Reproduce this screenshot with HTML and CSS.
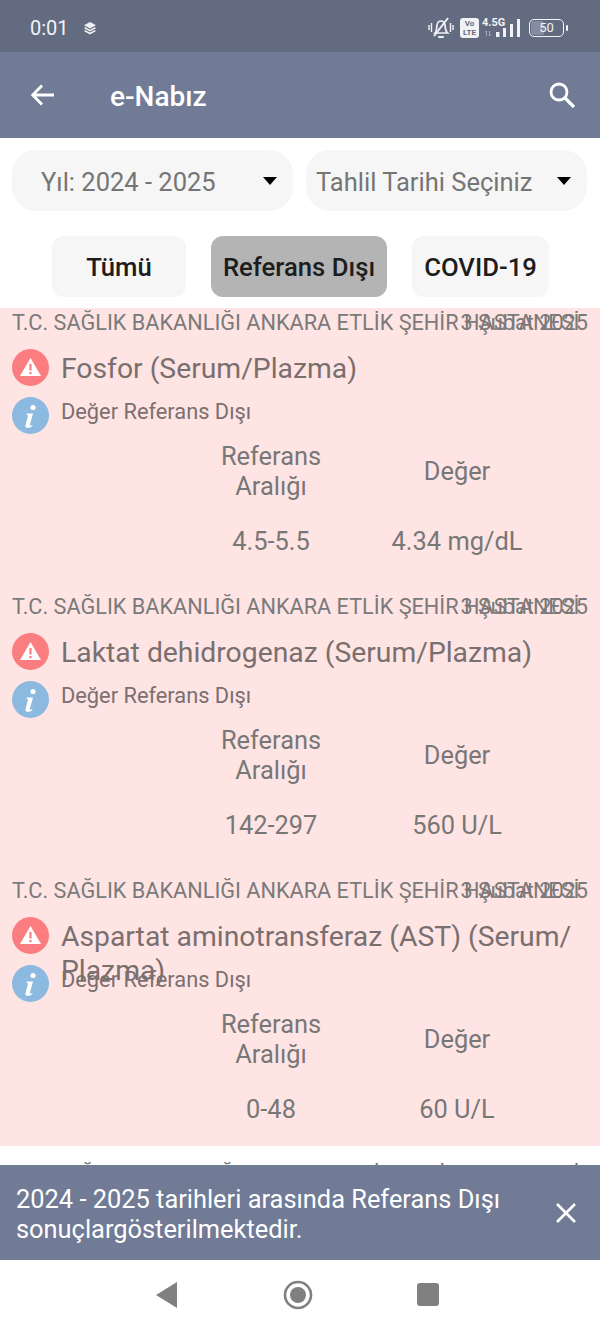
FILE: index.html
```html
<!DOCTYPE html>
<html lang="tr">
<head>
<meta charset="utf-8">
<title>e-Nabız</title>
<link rel="stylesheet" href="styles.css">
</head>
<body>
<div class="screen">
  <div class="statusbar">
    <div class="status-left">
      <span class="clock">0:01</span>
      <svg class="layers" viewBox="0 0 14 14" width="14" height="14"><path d="M7 1 13 4.200 7 7.400 1 4.200Z" fill="#eef0f4"/><path d="M1.600 6.800 7 9.700 12.400 6.800M1.600 9.600 7 12.500 12.400 9.600" fill="none" stroke="#eef0f4" stroke-width="1.600"/></svg>
    </div>
    <div class="status-right">
      <svg width="26" height="24" viewBox="0 0 26 24"><g fill="none" stroke="#f1f2f5" stroke-width="1.700"><path d="M7 17c2-2 1.500-5 2-8 .5-2.500 2-4 4-4s3.500 1.500 4 4c.5 3 0 6 2.500 8Z"/><path d="M6 20 20 2" stroke-width="2"/><path d="M1 9v5M3.500 7v9M22.500 7v9M25 9v5" stroke-width="1.400"/></g><rect x="10" y="20" width="6" height="2" rx="1" fill="#f1f2f5"/></svg>
      <span class="volte"><span>Vo</span><span>LTE</span></span>
      <span class="net">4.5G</span>
      <svg class="signal" width="38" height="18" viewBox="0 0 38 18"><path d="M3.500 17V12M2 13.500 3.500 12M6.500 12V17M8 15.500 6.500 17" fill="none" stroke="#f1f2f5" stroke-width="1" opacity=".45"/><g fill="#f1f2f5"><rect x="13" y="13" width="3.500" height="5"/><rect x="20" y="9" width="3" height="9"/><rect x="27" y="5" width="3" height="13"/><rect x="34" y="0" width="3" height="18"/></g></svg>
      <span class="battery"><span class="battery-fill"></span><span class="battery-num">50</span></span>
      <span class="battery-tip"></span>
    </div>
  </div>

  <header class="appbar">
    <svg class="back" width="28" height="28" viewBox="0 0 28 28"><path d="M25 14H4M13 4.500 3.700 14 13 23.500" fill="none" stroke="#fff" stroke-width="2.800"/></svg>
    <h1 class="apptitle">e-Nabız</h1>
    <svg class="search" width="30" height="30" viewBox="0 0 30 30"><circle cx="12" cy="12" r="8" fill="none" stroke="#fff" stroke-width="2.800"/><path d="M18 18 27 27" stroke="#fff" stroke-width="3.200"/></svg>
  </header>

  <div class="selects">
    <div class="select select-year"><span>Yıl: 2024 - 2025</span><i class="caret"></i></div>
    <div class="select select-date"><span>Tahlil Tarihi Seçiniz</span><i class="caret"></i></div>
  </div>

  <div class="tabs">
    <div class="tab tab-all">Tümü</div>
    <div class="tab tab-ref active">Referans Dışı</div>
    <div class="tab tab-covid">COVID-19</div>
  </div>

  <main class="list">
    <div class="group">
      <article class="card">
        <div class="head"><span class="hosp">T.C. SAĞLIK BAKANLIĞI ANKARA ETLİK ŞEHİR HASTANESİ</span><span class="date">3 Şubat 2025</span></div>
        <div class="row-title">
          <svg class="ic" viewBox="0 0 37 37"><circle cx="18.500" cy="18.500" r="18.500" fill="#fb7d7f"/><path d="M18.500 9 29 27H8Z" fill="#fff"/><path d="M18.500 15v6.500M18.500 23v2.200" stroke="#fb7d7f" stroke-width="2.200"/></svg>
          <h2 class="name">Fosfor (Serum/Plazma)</h2>
        </div>
        <div class="row-info">
          <svg class="ic" viewBox="0 0 37 37"><circle cx="18.500" cy="18.500" r="18.500" fill="#8cb9df"/><circle cx="21" cy="10.500" r="2.600" fill="#fff"/><path d="M15 16.500h6l-3.200 11.500c-.3 1 .8 1 2.700-.3l-.4 1.800c-3 2-7.500 2-6.600-1.500l2.400-8.700c.3-1.500-.8-1.500-1.500-1.300Z" fill="#fff"/></svg>
          <span class="info">Değer Referans Dışı</span>
        </div>
        <div class="table">
          <div class="th th-ref">Referans<br>Aralığı</div><div class="th">Değer</div>
          <div class="td">4.5-5.5</div><div class="td">4.34 mg/dL</div>
        </div>
      </article>

      <article class="card">
        <div class="head"><span class="hosp">T.C. SAĞLIK BAKANLIĞI ANKARA ETLİK ŞEHİR HASTANESİ</span><span class="date">3 Şubat 2025</span></div>
        <div class="row-title">
          <svg class="ic" viewBox="0 0 37 37"><circle cx="18.500" cy="18.500" r="18.500" fill="#fb7d7f"/><path d="M18.500 9 29 27H8Z" fill="#fff"/><path d="M18.500 15v6.500M18.500 23v2.200" stroke="#fb7d7f" stroke-width="2.200"/></svg>
          <h2 class="name">Laktat dehidrogenaz (Serum/Plazma)</h2>
        </div>
        <div class="row-info">
          <svg class="ic" viewBox="0 0 37 37"><circle cx="18.500" cy="18.500" r="18.500" fill="#8cb9df"/><circle cx="21" cy="10.500" r="2.600" fill="#fff"/><path d="M15 16.500h6l-3.200 11.500c-.3 1 .8 1 2.700-.3l-.4 1.800c-3 2-7.500 2-6.600-1.500l2.400-8.700c.3-1.500-.8-1.500-1.500-1.300Z" fill="#fff"/></svg>
          <span class="info">Değer Referans Dışı</span>
        </div>
        <div class="table">
          <div class="th th-ref">Referans<br>Aralığı</div><div class="th">Değer</div>
          <div class="td">142-297</div><div class="td">560 U/L</div>
        </div>
      </article>

      <article class="card card-last">
        <div class="head"><span class="hosp">T.C. SAĞLIK BAKANLIĞI ANKARA ETLİK ŞEHİR HASTANESİ</span><span class="date">3 Şubat 2025</span></div>
        <div class="row-title">
          <svg class="ic" viewBox="0 0 37 37"><circle cx="18.500" cy="18.500" r="18.500" fill="#fb7d7f"/><path d="M18.500 9 29 27H8Z" fill="#fff"/><path d="M18.500 15v6.500M18.500 23v2.200" stroke="#fb7d7f" stroke-width="2.200"/></svg>
          <h2 class="name">Aspartat aminotransferaz (AST) (Serum/<br>Plazma)</h2>
        </div>
        <div class="row-info">
          <svg class="ic" viewBox="0 0 37 37"><circle cx="18.500" cy="18.500" r="18.500" fill="#8cb9df"/><circle cx="21" cy="10.500" r="2.600" fill="#fff"/><path d="M15 16.500h6l-3.200 11.500c-.3 1 .8 1 2.700-.3l-.4 1.800c-3 2-7.500 2-6.600-1.500l2.400-8.700c.3-1.500-.8-1.500-1.500-1.300Z" fill="#fff"/></svg>
          <span class="info">Değer Referans Dışı</span>
        </div>
        <div class="table">
          <div class="th th-ref">Referans<br>Aralığı</div><div class="th">Değer</div>
          <div class="td">0-48</div><div class="td">60 U/L</div>
        </div>
      </article>
    </div>

    <article class="card card-next">
      <div class="head"><span class="hosp">T.C. SAĞLIK BAKANLIĞI ANKARA ETLİK ŞEHİR HASTANESİ</span><span class="date">3 Şubat 2025</span></div>
    </article>
  </main>

  <div class="toast">
    <p class="toast-text">2024 - 2025 tarihleri arasında Referans Dışı<br>sonuçlargösterilmektedir.</p>
    <svg class="toast-close" width="24" height="24" viewBox="0 0 24 24"><path d="M3 3 21 21M21 3 3 21" stroke="#fff" stroke-width="2.600"/></svg>
  </div>

  <nav class="navbar">
    <svg width="24" height="26" viewBox="0 0 24 26"><path d="M22 0V26L1 13Z" fill="#808080"/></svg>
    <svg width="30" height="30" viewBox="0 0 30 30"><circle cx="15" cy="15" r="13" fill="none" stroke="#808080" stroke-width="2.600"/><circle cx="15" cy="15" r="8" fill="#808080"/></svg>
    <span class="nav-square"></span>
  </nav>
</div>
</body>
</html>
```
FILE: styles.css
```css
* { box-sizing: border-box; }
html, body { margin: 0; padding: 0; }
body { font-family: Roboto, "Noto Sans", sans-serif; background: #fff; }
.screen { position: relative; width: 600px; height: 1333px; overflow: hidden; background: #fff; display: flex; flex-direction: column; }

.statusbar { height: 52px; flex: none; background: #636b80; display: flex; align-items: center; justify-content: space-between; padding: 4px 32px 0 30px; color: #f1f2f5; }
.status-left { display: flex; align-items: center; gap: 14px; }
.clock { font-size: 20px; }
.layers { display: block; }
.status-right { display: flex; align-items: center; }
.volte { width: 19px; height: 20px; margin-left: 6px; border-radius: 3px; background: #f1f2f5; color: #636b80; font-size: 8px; font-weight: 700; line-height: 9px; display: flex; flex-direction: column; align-items: center; justify-content: center; }
.net { font-size: 11px; font-weight: 700; align-self: flex-start; margin-left: 3px; width: 24px; line-height: 13px; }
.signal { margin-left: -23px; display: block; }
.battery { position: relative; width: 35px; height: 18px; margin-left: 8px; border: 1.500px solid #f1f2f5; border-radius: 5px; display: flex; align-items: center; justify-content: center; overflow: hidden; }
.battery-fill { position: absolute; left: 1px; top: 1px; bottom: 1px; width: 13px; background: #858c9f; border-radius: 2px; }
.battery-num { position: relative; font-size: 13px; line-height: 14px; }
.battery-tip { width: 2px; height: 6px; margin-left: 2px; background: #f1f2f5; border-radius: 1px; }

.appbar { height: 86px; flex: none; background: #717b96; display: flex; align-items: center; padding: 0 23px 0 29px; color: #fff; }
.back { display: block; flex: none; }
.apptitle { margin: 2px 0 0 53px; flex: 1; font-size: 28px; font-weight: 500; color: #fff; }
.search { display: block; flex: none; }

.selects { flex: none; display: flex; gap: 13px; padding: 12px 12px 0; }
.select { flex: 0 0 281px; height: 61px; border-radius: 24px; background: #f6f6f6; display: flex; align-items: center; justify-content: space-between; font-size: 25.500px; color: #757575; }
.select span { padding-top: 2px; }
.select-year { padding: 0 16px 0 29px; }
.select-date { padding: 0 16px 0 10px; }
.caret { width: 0; height: 0; border-left: 7.500px solid transparent; border-right: 7.500px solid transparent; border-top: 8px solid #000; }

.tabs { flex: none; display: flex; justify-content: center; gap: 25px; padding: 25px 0 0 1px; }
.tab { height: 61px; border-radius: 12px; background: #f6f6f6; display: flex; align-items: center; justify-content: center; font-size: 25.700px; font-weight: 500; color: #1d1d1d; }
.tab-all { width: 134px; }
.tab-ref { width: 176px; }
.tab-covid { width: 137px; }
.tab.active { background: #b4b4b4; }

.list { flex: none; margin-top: 11px; }
.group { background: #ffe4e4; height: 838px; }
.card { height: 284px; }
.card-last { height: 270px; }
.card-next { margin-top: 14px; height: 40px; }
.head { position: relative; height: 30px; padding: 3px 12px 0 12px; font-size: 21.700px; line-height: 24px; color: #7a7a7a; white-space: nowrap; }
.date { position: absolute; right: 12px; top: 3px; }
.row-title { display: flex; align-items: flex-start; height: 59px; padding: 11px 12px 0; }
.ic { width: 37px; height: 37px; flex: none; display: block; }
.name { margin: 3px 0 0 12px; font-size: 28.300px; font-weight: 400; line-height: 34px; color: #7a6f6f; white-space: nowrap; }
.row-info { display: flex; align-items: flex-start; height: 44px; padding: 0 12px; }
.info { margin-left: 12px; font-size: 21.800px; line-height: 30px; color: #7a7070; }
.table { display: grid; grid-template-columns: 186px 186px; justify-content: start; margin-left: 178px; font-size: 25.400px; color: #777; text-align: center; }
.th { height: 60px; line-height: 30px; display: flex; align-items: center; justify-content: center; }
.td { height: 30px; line-height: 30px; margin-top: 25px; }

.toast { position: absolute; left: 0; right: 0; top: 1165px; height: 95px; background: #717b96; display: flex; align-items: center; justify-content: space-between; padding: 0 22px 0 16px; }
.toast-text { margin: 3px 0 0; font-size: 25.400px; line-height: 30px; color: #fff; }
.toast-close { display: block; flex: none; }

.navbar { position: absolute; left: 0; right: 0; top: 1260px; height: 73px; background: #fff; display: flex; align-items: center; justify-content: center; gap: 104px; padding-bottom: 4px; padding-right: 7px; }
.nav-square { width: 22px; height: 23px; border-radius: 3px; background: #808080; display: block; }
```
